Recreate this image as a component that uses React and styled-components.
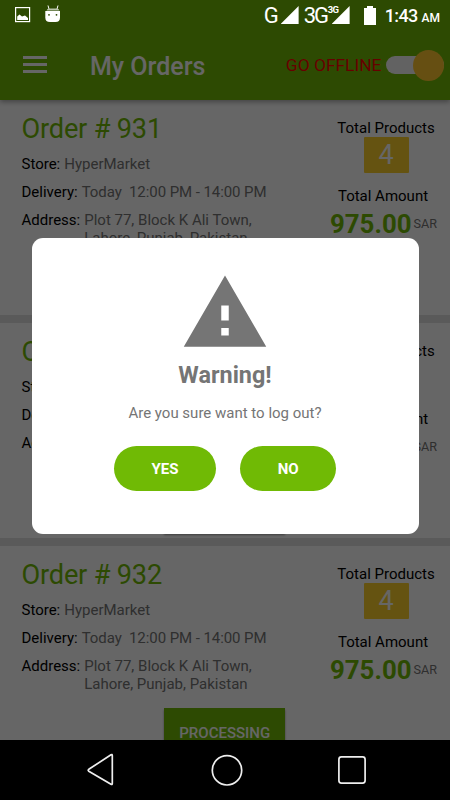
import React, { useState } from 'react';
import styled, { createGlobalStyle } from 'styled-components';

const orders = [
  { id: 931, store: 'HyperMarket', products: 4, amount: '975.00' },
  { id: 930, store: 'HyperMarket', products: 4, amount: '975.00' },
  { id: 932, store: 'HyperMarket', products: 4, amount: '975.00' },
]

function StatusBar() {
  return (
    <Status>
      <svg width="46" height="20" viewBox="0 0 46 20">
        <rect x="0.6" y="2.6" width="14" height="14" fill="none" stroke="#fff" strokeWidth="1.2" />
        <path d="M2.2 15V11.5L4.5 9.5L7 11.6L10 10.4L13 13V15Z" fill="#fff" />
        <path d="M33 0.500L34 4M43 0.500L42 4" stroke="#fff" strokeWidth="1" />
        <path d="M31.5 5.5Q32 3.5 34.5 3.5H41.500Q44 3.500 44.500 5.500Z" fill="#b9c4ab" />
        <path d="M30.300 6H45V12.500Q45 17 40.500 17H35Q30.300 17 30.300 12.500Z" fill="#fff" />
        <circle cx="34" cy="9.800" r="0.9" fill="#2d4a02" />
        <circle cx="41.500" cy="9.800" r="0.9" fill="#2d4a02" />
      </svg>
      <StatusRight>
        <Network>G</Network>
        <Signal />
        <Network $narrow>3G</Network>
        <SignalWrap>
          <Signal />
          <Sup>3G</Sup>
        </SignalWrap>
        <svg width="12" height="19" viewBox="0 0 12 19">
          <path d="M3 0H9V2H12V19H0V2H3Z" fill="#fff" />
        </svg>
        <Clock>1:43 <small>AM</small></Clock>
      </StatusRight>
    </Status>
  )
}

function Order({ order }) {
  return (
    <Card>
      <Details>
        <OrderTitle>Order # {order.id}</OrderTitle>
        <Row><b>Store:</b><span>{order.store}</span></Row>
        <Row $tight><b>Delivery:</b><span>{'Today  12:00 PM - 14:00 PM'}</span></Row>
        <Row><b>Address:</b><span>{'Plot 77, Block K Ali Town,\nLahore, Punjab, Pakistan'}</span></Row>
      </Details>
      <Totals>
        <TotalLabel>Total Products</TotalLabel>
        <Count>{order.products}</Count>
        <TotalLabel $shift>Total Amount</TotalLabel>
        <Amount>{order.amount}<small>SAR</small></Amount>
      </Totals>
      <Processing>PROCESSING</Processing>
    </Card>
  )
}

function App() {
  const [open, setOpen] = useState(true);
  return (
    <Phone>
      <GlobalStyle />
      <Screen>
        <Header>
          <Burger><i /><i /><i /></Burger>
          <Title>My Orders</Title>
          <Offline>GO OFFLINE</Offline>
          <Toggle><Thumb /></Toggle>
        </Header>
        <List>
          {orders.map((order) => <Order key={order.id} order={order} />)}
        </List>
        {open && (
          <Scrim>
            <Dialog>
              <svg width="90" height="90" viewBox="0 0 24 24">
                <path d="M1 21h22L12 2 1 21zm12-3h-2v-2h2v2zm0-4h-2v-4h2v4z" fill="#757575" />
              </svg>
              <Heading>Warning!</Heading>
              <Message>Are you sure want to log out?</Message>
              <Actions>
                <Button $width="102.500px" onClick={() => setOpen(false)}>YES</Button>
                <Button $width="96px" onClick={() => setOpen(false)}>NO</Button>
              </Actions>
            </Dialog>
          </Scrim>
        )}
        <StatusBar />
      </Screen>
      <NavBar>
        <svg width="28" height="34" viewBox="0 0 28 34">
          <path d="M25.300 2.500V30.500Q25.300 32 24 31.200L1.800 18.200Q0.500 17.300 1.800 16.300L24 1.800Q25.300 1 25.300 2.500Z" />
        </svg>
        <svg width="32" height="32" viewBox="0 0 32 32">
          <circle cx="16" cy="16.300" r="14.700" />
        </svg>
        <svg width="28" height="28" viewBox="0 0 28 28">
          <rect x="0.9" y="0.9" width="26.200" height="26.200" rx="2.500" />
        </svg>
      </NavBar>
    </Phone>
  )
}

export default App;

const GlobalStyle = createGlobalStyle`
*{
  box-sizing:border-box;
}
body{
  margin:0;
  font-family:Roboto, "Liberation Sans", sans-serif;
}
`
const Phone = styled.div`
width:450px;
height:800px;
display:flex;
flex-direction:column;
overflow:hidden;
background:black;
`
const Screen = styled.div`
position:relative;
height:740px;
display:flex;
flex-direction:column;
overflow:hidden;
background:white;
`
const Header = styled.div`
position:relative;
z-index:1;
flex:none;
height:100px;
padding:30px 6.500px 0 23px;
display:flex;
align-items:center;
background:#70ba05;
box-shadow:0 2px 5px rgba(0,0,0,.35);
`
const Burger = styled.div`
width:24px;
margin-top:-1px;
display:flex;
flex-direction:column;
gap:4.500px;
i{
  height:2.500px;
  background:white;
}
`
const Title = styled.div`
flex:1;
margin:2px 0 0 43px;
font-size:25px;
font-weight:500;
color:white;
`
const Offline = styled.div`
margin-right:4.500px;
font-size:17.400px;
color:red;
`
const Toggle = styled.div`
width:57.500px;
height:18px;
display:flex;
align-items:center;
justify-content:flex-end;
border-radius:9px;
background:#f5f5f5;
`
const Thumb = styled.div`
width:31px;
height:31px;
flex:none;
border-radius:50%;
background:#ffc62f;
`
const List = styled.div`
flex:1;
overflow:hidden;
`
const Card = styled.div`
height:223px;
padding:10px 10px 0 21.500px;
display:grid;
grid-template-columns:1fr auto;
grid-template-rows:152px auto;
border-bottom:8.500px solid #e0e0e0;
`
const Details = styled.div`
padding-top:0.500px;
display:flex;
flex-direction:column;
`
const OrderTitle = styled.div`
margin-bottom:9.500px;
line-height:36px;
font-size:27.200px;
letter-spacing:-0.200px;
color:#70ba05;
`
const Row = styled.div`
display:flex;
gap:4px;
margin-bottom:10.400px;
line-height:17.600px;
font-size:15px;
b{
  font-weight:400;
  color:black;
}
span{
  color:#757575;
  white-space:pre;
  letter-spacing:${props=>props.$tight ? '-0.070px' : '0'};
}
`
const Totals = styled.div`
width:108px;
display:flex;
flex-direction:column;
align-items:center;
`
const TotalLabel = styled.div`
margin-top:${props=>props.$shift ? '14px' : '8.500px'};
margin-right:${props=>props.$shift ? '6px' : '0'};
line-height:18px;
font-size:15px;
white-space:nowrap;
`
const Count = styled.div`
width:45px;
height:36.500px;
border-radius:1px;
text-align:center;
line-height:37px;
font-size:27px;
color:white;
background:#fdcf2c;
`
const Amount = styled.div`
display:flex;
align-items:center;
margin-top:3.500px;
margin-right:5px;
line-height:30px;
font-size:25.800px;
font-weight:700;
color:#70ba05;
small{
  margin-left:2px;
  font-size:12.600px;
  font-weight:400;
  color:#757575;
}
`
const Processing = styled.div`
grid-column:1 / 3;
justify-self:center;
width:121px;
height:48px;
margin-right:12px;
text-align:center;
line-height:50px;
font-size:15px;
font-weight:500;
color:white;
background:#70ba05;
box-shadow:0 2px 2px rgba(0,0,0,.4);
`
const Scrim = styled.div`
position:absolute;
inset:0;
z-index:2;
display:flex;
justify-content:center;
align-items:flex-start;
padding-top:238px;
background:rgba(0,0,0,.6);
`
const Dialog = styled.div`
width:387px;
height:295.500px;
padding-top:30px;
display:flex;
flex-direction:column;
align-items:center;
border-radius:11px;
background:white;
`
const Heading = styled.div`
margin-top:2px;
line-height:30px;
font-size:23.400px;
font-weight:700;
color:#757575;
`
const Message = styled.div`
margin-top:13px;
line-height:20px;
font-size:15px;
color:#757575;
`
const Actions = styled.div`
display:flex;
gap:24px;
margin-top:23px;
`
const Button = styled.button`
width:${props=>props.$width};
height:44.500px;
padding:2px 0 0;
border:none;
border-radius:23px;
font-family:inherit;
font-size:15px;
font-weight:700;
color:white;
background:#70ba05;
cursor:pointer;
`
const Status = styled.div`
position:absolute;
top:0;
left:0;
right:0;
z-index:3;
height:30px;
padding:0 10px 0 15px;
display:flex;
align-items:center;
justify-content:space-between;
color:white;
`
const StatusRight = styled.div`
display:flex;
align-items:center;
`
const Network = styled.div`
width:${props=>props.$narrow ? '25px' : '17px'};
margin-left:${props=>props.$narrow ? '5px' : '0'};
font-size:22px;
letter-spacing:${props=>props.$narrow ? '-2px' : '0'};
`
const Signal = styled.div`
width:18px;
height:18px;
background:white;
clip-path:polygon(100% 0, 100% 100%, 0 100%);
`
const SignalWrap = styled.div`
position:relative;
margin:0 14px 0 3px;
`
const Sup = styled.div`
position:absolute;
top:-1px;
left:-4px;
line-height:10px;
font-size:9.500px;
font-weight:700;
letter-spacing:-0.500px;
`
const Clock = styled.div`
margin-left:9px;
font-size:18px;
font-weight:500;
letter-spacing:-0.600px;
small{
  font-size:12px;
  letter-spacing:0;
}
`
const NavBar = styled.div`
height:60px;
padding:0 84px 0 87px;
display:flex;
align-items:center;
justify-content:space-between;
svg{
  fill:none;
  stroke:#eee;
  stroke-width:1.700;
}
`
